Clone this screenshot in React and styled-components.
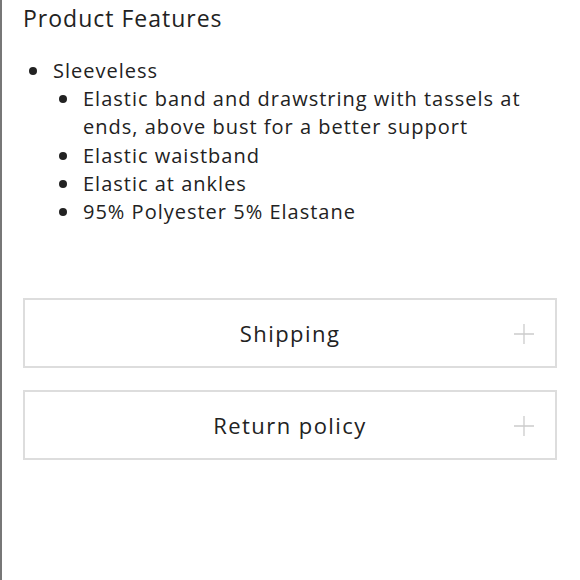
import React from 'react'
import styled, { createGlobalStyle } from 'styled-components'

const GlobalStyle = createGlobalStyle`
  html, body {
    margin: 0;
    padding: 0;
    background: #fff;
  }
  body {
    font-family: "Open Sans", "Noto Sans", sans-serif;
    color: #222;
  }
`

const Page = styled.div`
  width: 580px;
  height: 580px;
  box-sizing: border-box;
  border-left: 2px solid #777;
  padding: 2px 23px 0 21px;
`

const Title = styled.h2`
  margin: 0;
  font-size: 23px;
  font-weight: 400;
  line-height: 32px;
  letter-spacing: 1px;
`

const List = styled.ul`
  margin: ${p => (p.$nested ? '0' : '23px 0 0')};
  padding: 0 0 0 30px;
  list-style: none;
  font-size: 20px;
  line-height: 28.2px;
  letter-spacing: 1px;
`

const Item = styled.li`
  position: relative;

  &::before {
    content: '';
    position: absolute;
    left: -24px;
    top: 10px;
    width: 8px;
    height: 8px;
    border-radius: 50%;
    background: #222;
  }
`

const Accordions = styled.div`
  margin-top: 72px;
  display: flex;
  flex-direction: column;
  gap: 22px;
`

const Panel = styled.div`
  position: relative;
  height: 70px;
  box-sizing: border-box;
  border: 2px solid #ddd;
  display: flex;
  align-items: center;
  justify-content: center;
  font-size: 22px;
  letter-spacing: 1.45px;
  color: #222;
`

const Plus = styled.svg`
  position: absolute;
  right: 20px;
  top: 50%;
  margin-top: -10px;
`

function Accordion({ label }) {
  return (
    <Panel>
      {label}
      <Plus width="22" height="22" viewBox="0 0 22 22">
        <path d="M11 1v20M1 11h20" stroke="#ccc" strokeWidth="1.3" fill="none" />
      </Plus>
    </Panel>
  )
}

export default function App() {
  return (
    <>
      <GlobalStyle />
      <Page>
        <Title>Product Features</Title>
        <List>
          <Item>
            Sleeveless
            <List $nested>
              <Item>Elastic band and drawstring with tassels at ends, above bust for a better support</Item>
              <Item>Elastic waistband</Item>
              <Item>Elastic at ankles</Item>
              <Item>95% Polyester 5% Elastane</Item>
            </List>
          </Item>
        </List>
        <Accordions>
          <Accordion label="Shipping" />
          <Accordion label="Return policy" />
        </Accordions>
      </Page>
    </>
  )
}
